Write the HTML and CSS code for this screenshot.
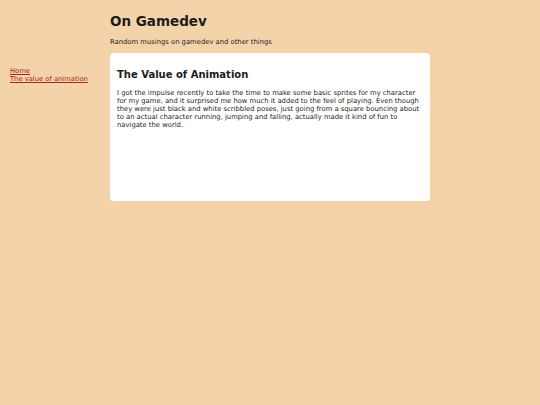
FILE: index.html
```html
<!DOCTYPE html>
<html>
<head>
<meta charset="utf-8">
<link rel="stylesheet" href="styles.css">
</head>
<body>
<div class="page">
  <nav class="sidebar">
    <a href="#">Home</a>
    <a href="#">The value of animation</a>
  </nav>
  <main class="main">
    <h1 class="title">On Gamedev</h1>
    <p class="tagline">Random musings on gamedev and other things</p>
    <article class="card">
      <h2 class="card-title">The Value of Animation</h2>
      <p class="card-text">I got the impulse recently to take the time to make some basic sprites for my character for my game, and it surprised me how much it added to the feel of playing. Even though they were just black and white scribbled poses, just going from a square bouncing about to an actual character running, jumping and falling, actually made it kind of fun to navigate the world.</p>
    </article>
  </main>
</div>
</body>
</html>
```
FILE: styles.css
```css
html, body {
  margin: 0;
  padding: 0;
  background: #f4d3aa;
  font-family: "DejaVu Sans", sans-serif;
  color: #1c1c1c;
}
.page {
  display: flex;
  align-items: flex-start;
}
.sidebar {
  width: 100px;
  padding: 67px 0 0 10px;
  display: flex;
  flex-direction: column;
  font-size: 6.75px;
  line-height: 8px;
}
.sidebar a {
  color: #a0281c;
}
.main {
  width: 320px;
  padding-top: 13px;
}
.title {
  margin: 0;
  font-size: 13.5px;
  line-height: 16px;
  font-weight: bold;
}
.tagline {
  margin: 9px 0 0 0;
  font-size: 6.8px;
  line-height: 8px;
}
.card {
  margin-top: 7px;
  background: #fff;
  border-radius: 4px;
  height: 148px;
  box-sizing: border-box;
  padding: 16px 7px 7px 7px;
}
.card-title {
  margin: 0;
  font-size: 10px;
  line-height: 12px;
  font-weight: bold;
}
.card-text {
  margin: 8px 0 0 0;
  font-size: 6.8px;
  line-height: 8px;
}
```
